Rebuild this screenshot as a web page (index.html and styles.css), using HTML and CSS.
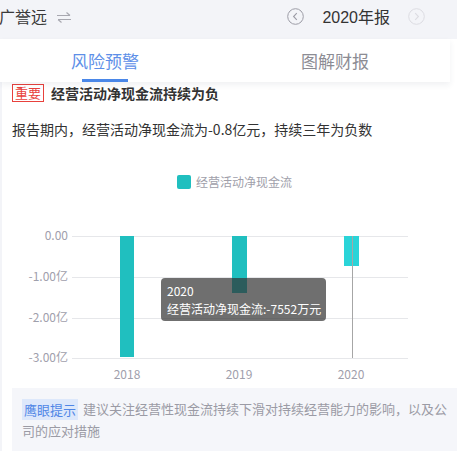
FILE: index.html
```html
<!DOCTYPE html>
<html lang="zh">
<head>
<meta charset="utf-8">
<link rel="stylesheet" href="styles.css">
</head>
<body>
<div class="page">
  <header class="header">
    <div class="company">
      <span class="name">广誉远</span>
      <svg class="swap" width="16" height="12" viewBox="0 0 16 12">
        <path d="M1 4.5H14M10.5 1.5L14 4.5" fill="none" stroke="#a8a8b0" stroke-width="1.2"/>
        <path d="M15 8.5H2M5.5 11.5L2 8.5" fill="none" stroke="#a8a8b0" stroke-width="1.2"/>
      </svg>
    </div>
    <div class="period">
      <svg class="nav" width="17" height="17" viewBox="0 0 17 17">
        <circle cx="8.5" cy="8.5" r="7.8" fill="none" stroke="#9c9ca6" stroke-width="1"/>
        <path d="M9.8 5.2L6.6 8.5L9.8 11.8" fill="none" stroke="#9c9ca6" stroke-width="1.1"/>
      </svg>
      <span class="year">2020年报</span>
      <svg class="nav" width="17" height="17" viewBox="0 0 17 17">
        <circle cx="8.5" cy="8.5" r="7.8" fill="none" stroke="#dcdce2" stroke-width="1"/>
        <path d="M7.2 5.2L10.4 8.5L7.2 11.8" fill="none" stroke="#dcdce2" stroke-width="1.1"/>
      </svg>
    </div>
  </header>

  <nav class="tabs">
    <div class="tab active">风险预警<span class="bar"></span></div>
    <div class="tab">图解财报</div>
  </nav>

  <section class="content">
    <div class="alert">
      <span class="tag">重要</span>
      <span class="title">经营活动净现金流持续为负</span>
    </div>
    <p class="desc">报告期内，经营活动净现金流为-0.8亿元，持续三年为负数</p>

    <div class="chart">
      <svg width="463" height="220" viewBox="0 0 463 220">
        <rect x="177" y="11" width="14" height="14" rx="2" fill="#20bfbf"/>
        <text x="196" y="23" class="legend">经营活动净现金流</text>

        <g stroke="#e6e7ea" stroke-width="1">
          <line x1="72" y1="72.5" x2="408" y2="72.5"/>
          <line x1="72" y1="113.5" x2="408" y2="113.5"/>
          <line x1="72" y1="154.5" x2="408" y2="154.5"/>
          <line x1="72" y1="194.5" x2="408" y2="194.5"/>
        </g>

        <g class="ylab">
          <text x="68" y="76">0.00</text>
          <text x="68" y="117">-1.00亿</text>
          <text x="68" y="158">-2.00亿</text>
          <text x="68" y="198">-3.00亿</text>
        </g>

        <rect x="120" y="72" width="14" height="121" fill="#20bfbf"/>
        <rect x="232" y="72" width="15" height="57" fill="#20bfbf"/>
        <rect x="344" y="72" width="15" height="30" fill="#2ad4d8"/>
        <line x1="352.5" y1="72" x2="352.5" y2="194" stroke="#a6a6a6" stroke-width="1"/>

        <g class="xlab">
          <text x="127" y="215">2018</text>
          <text x="239" y="215">2019</text>
          <text x="351" y="215">2020</text>
        </g>
      </svg>
      <div class="tooltip">
        <div>2020</div>
        <div>经营活动净现金流:-7552万元</div>
      </div>
    </div>

    <div class="tip">
      <div class="tip-line">
        <span class="tip-tag">鹰眼提示</span>
        <span class="tip-text">建议关注经营性现金流持续下滑对持续经营能力的影响，以及公</span>
      </div>
      <div class="tip-text">司的应对措施</div>
    </div>
  </section>
</div>
</body>
</html>
```

FILE: styles.css
```css
* { box-sizing: border-box; }

html, body {
  margin: 0;
  padding: 0;
  background: #ffffff;
}

body {
  width: 463px;
  height: 459px;
  overflow: hidden;
  font-family: "Noto Sans CJK SC", "Noto Sans", sans-serif;
  color: #333;
}

.page {
  width: 463px;
}

.header {
  height: 39px;
  width: 457px;
  background: #f3f4f8;
  display: flex;
  align-items: center;
  justify-content: space-between;
  padding-bottom: 7px;
}

.company {
  display: flex;
  align-items: center;
  gap: 9px;
}

.name {
  font-size: 16px;
  color: #3a3a3a;
  margin-left: -1px;
}

.swap {
  margin-top: 1px;
}

.period {
  display: flex;
  align-items: center;
  padding-right: 32px;
}

.year {
  font-size: 16px;
  color: #333;
  margin: 0 18px 0 18px;
  font-family: "Liberation Sans", "Noto Sans CJK SC", sans-serif;
}

.tabs {
  position: relative;
  z-index: 1;
  height: 43px;
  width: 450px;
  background: #fff;
  display: grid;
  grid-template-columns: 210px 250px;
  box-shadow: 0 3px 6px rgba(40, 50, 80, 0.07);
}

.tab {
  position: relative;
  text-align: center;
  font-size: 17px;
  line-height: 43px;
  color: #8c8c94;
}

.tab.active {
  color: #5d8fe8;
}

.tab .bar {
  position: absolute;
  left: 82px;
  bottom: 0;
  width: 46px;
  height: 3px;
  background: #4a87e8;
}

.content {
  border-left: 2px solid #f3f4f8;
  width: 457px;
}

.alert {
  display: flex;
  align-items: center;
  gap: 7px;
  padding: 1px 0 0 10px;
  height: 20px;
}

.tag {
  display: inline-block;
  border: 1px solid #e8413c;
  color: #e8413c;
  font-size: 13px;
  line-height: 16px;
  height: 18px;
  padding: 0 2px;
}

.title {
  font-size: 14px;
  font-weight: bold;
  color: #333;
}

.desc {
  margin: 17px 0 0 10px;
  font-size: 14px;
  line-height: 20px;
  color: #333;
}

.chart {
  position: relative;
  margin-left: -2px;
  margin-top: 25px;
  height: 220px;
}

.chart svg {
  display: block;
}

.legend {
  font-size: 12px;
  fill: #a0a0aa;
}

.ylab text {
  font-size: 12px;
  fill: #9fa0ac;
  text-anchor: end;
}

.xlab text {
  font-size: 12px;
  fill: #9fa0ac;
  text-anchor: middle;
}

.tooltip {
  position: absolute;
  left: 161px;
  top: 114px;
  width: 165px;
  height: 43px;
  padding: 4px 6px;
  background: rgba(50, 50, 50, 0.7);
  border-radius: 4px;
  color: #fff;
  font-size: 12px;
  line-height: 17.5px;
  white-space: nowrap;
}

.tip {
  margin: 4px 0 0 10px;
  width: 445px;
  background: #f5f6fa;
  padding: 10px 6px 9px 10px;
  font-size: 13px;
  line-height: 22px;
  color: #9b9ba5;
}

.tip-line {
  display: flex;
  align-items: center;
  gap: 5px;
  white-space: nowrap;
}

.tip-tag {
  display: inline-block;
  background: #dde8fb;
  color: #4f86e6;
  padding: 0 2px;
  line-height: 21px;
}
```
